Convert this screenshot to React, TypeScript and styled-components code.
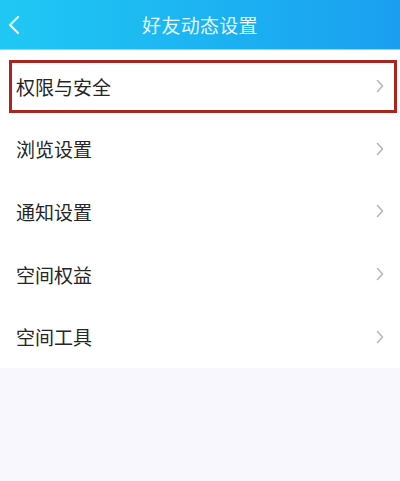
import React from "react";
import styled, { createGlobalStyle } from "styled-components";

const GlobalStyle = createGlobalStyle`
  html, body {
    margin: 0;
    padding: 0;
    background: #f8f7fd;
  }
  body {
    font-family: "Noto Sans CJK SC", "Noto Sans", sans-serif;
  }
`;

const Page = styled.div`
  width: 400px;
  min-height: 481px;
  background: #f8f7fd;
`;

const Header = styled.header`
  height: 49px;
  display: grid;
  grid-template-columns: 60px 1fr 60px;
  align-items: center;
  background: linear-gradient(90deg, #20c8f4 0%, #1cb4f2 50%, #1a9ff0 100%);
  border-bottom: 1px solid #8fd6f5;
`;

const BackButton = styled.button`
  background: none;
  border: none;
  padding: 0 0 0 7px;
  height: 49px;
  display: flex;
  align-items: center;
  cursor: pointer;
`;

const Title = styled.h1`
  margin: 0;
  text-align: center;
  font-size: 19px;
  font-weight: 400;
  color: #e8f8ff;
  letter-spacing: 0.3px;
`;

const List = styled.ul`
  list-style: none;
  margin: 0;
  padding: 5px 0 0;
  background: #fff;
`;

const Row = styled.li`
  height: 62.6px;
  padding: 5px 3px 5px 9px;
  box-sizing: border-box;
  display: flex;
`;

const RowInner = styled.div<{ $active?: boolean }>`
  flex: 1;
  display: flex;
  align-items: center;
  justify-content: space-between;
  padding: 0 10px 0 4px;
  border: 3px solid ${(p) => (p.$active ? "#a8261f" : "transparent")};
  cursor: pointer;
`;

const Label = styled.span`
  font-size: 19px;
  color: #262626;
  font-weight: 400;
`;

const Chevron = () => (
  <svg width="8" height="14" viewBox="0 0 8 14">
    <path d="M1.5 1.5 L6.5 7 L1.5 12.5" fill="none" stroke="#b8b8b8" strokeWidth="1.6" strokeLinecap="round" strokeLinejoin="round" />
  </svg>
);

const items = ["权限与安全", "浏览设置", "通知设置", "空间权益", "空间工具"];

export default function App() {
  return (
    <Page>
      <GlobalStyle />
      <Header>
        <BackButton>
          <svg width="14" height="20" viewBox="0 0 14 20">
            <path d="M11 2 L3 10 L11 18" fill="none" stroke="#e6f8ff" strokeWidth="2.2" strokeLinecap="round" strokeLinejoin="round" />
          </svg>
        </BackButton>
        <Title>好友动态设置</Title>
        <span />
      </Header>
      <List>
        {items.map((label, i) => (
          <Row key={label}>
            <RowInner $active={i === 0}>
              <Label>{label}</Label>
              <Chevron />
            </RowInner>
          </Row>
        ))}
      </List>
    </Page>
  );
}
